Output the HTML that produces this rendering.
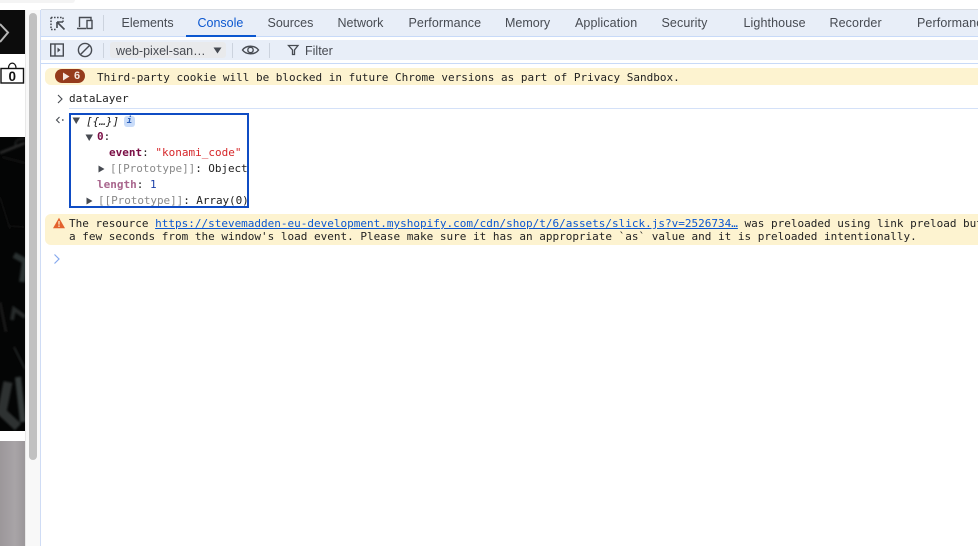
<!DOCTYPE html>
<html><head><meta charset="utf-8"><style>
html,body{margin:0;padding:0;background:#fff}
body{width:978px;height:546px;position:relative;overflow:hidden;filter:blur(.3px)}
.a{position:absolute}
.t{position:absolute;top:16px;font:12.5px/14px "Liberation Sans",sans-serif;color:#474b52;white-space:nowrap}
.m{position:absolute;font:11px/13px "DejaVu Sans Mono",monospace;color:#222;white-space:pre}
</style></head><body>
<div class="a" style="left:0;top:0;width:75px;height:3px;background:#f4f4f4;border-radius:0 0 8px 0"></div>

<!-- left page -->
<div class="a" style="left:0;top:10px;width:25px;height:44px;background:#0c0c0c"></div>
<svg class="a" style="left:0;top:22px" width="12" height="24"><path d="M0 2L8 10.5L0 20" fill="none" stroke="#b5b5b5" stroke-width="2"/></svg>
<svg class="a" style="left:0;top:60px" width="26" height="26"><path d="M8.5 8C8.5 1.5 16 1.5 16 8" fill="none" stroke="#111" stroke-width="1.2"/><rect x="1" y="8.5" width="22.5" height="14.5" fill="#fff" stroke="#111" stroke-width="1.4"/></svg>
<div class="a" style="left:1px;top:70px;width:22.5px;text-align:center;font:bold 13.5px/14px 'Liberation Sans',sans-serif;color:#111">0</div>
<svg class="a" style="left:0;top:137px" width="25" height="294" viewBox="0 0 25 294">
<defs><filter id="b" x="-30%" y="-30%" width="160%" height="160%"><feGaussianBlur stdDeviation="1.1"/></filter></defs>
<rect width="25" height="294" fill="#040505"/>
<g filter="url(#b)" fill="none">
<path d="M0 16L10 12L25 6" stroke-width="2.5" stroke="#2e2f2f"/>
<path d="M16 10C14 5 17 1 25 2" stroke-width="1.5" stroke="#252727"/>
<path d="M2 20L25 26" stroke-width="1.2" stroke="#1c1c1c"/>
<path d="M0 60L10 92" stroke-width="1" stroke="#191919"/>
<path d="M8 89L25 90" stroke-width="1" stroke="#191919"/>
<path d="M14 118L25 124L22 145" stroke-width="6" stroke="#2a3030"/>
<path d="M12 183L14 172L25 180" stroke-width="4" stroke="#262a2a"/>
<path d="M0 165L6 195" stroke-width="2.5" stroke="#1b1d1d"/>
<path d="M14 210L25 232" stroke-width="2" stroke="#202222"/>
<path d="M8 245L2 275L18 290" stroke-width="9" stroke="#2d3232"/>
<path d="M18 240L23 285" stroke-width="6" stroke="#343a3a"/>
</g></svg>
<div class="a" style="left:0;top:441px;width:25px;height:105px;background:linear-gradient(90deg,#9c979a,#a8a4a7 60%,#9b979a)"></div>

<!-- scrollbar -->
<div class="a" style="left:25px;top:10px;width:15px;height:536px;background:#f8f8f8;border-left:1px solid #e8e8e8;box-sizing:border-box"></div>
<div class="a" style="left:29px;top:13px;width:8px;height:447px;background:#c1c1c1;border-radius:4px"></div>
<div class="a" style="left:40px;top:10px;width:1px;height:536px;background:#cfdcf5"></div>

<!-- toolbars -->
<div class="a" style="left:41px;top:9px;width:937px;height:1px;background:#d9dde3"></div>
<div class="a" style="left:41px;top:10px;width:937px;height:26px;background:#e8eef8"></div>
<div class="a" style="left:41px;top:36px;width:937px;height:1px;background:#c8daf8"></div>
<div class="a" style="left:186px;top:35px;width:70px;height:2px;background:#0b57d0"></div>
<div class="a" style="left:41px;top:40px;width:937px;height:20px;background:#e8eef8"></div>
<div class="a" style="left:41px;top:63px;width:937px;height:1px;background:#c8daf8"></div>

<svg class="a" style="left:49px;top:14px" width="20" height="18" fill="none" stroke="#474b52">
<path d="M2 3.5H14M2 3.5V15.5M14 3.5V8M2 15.5H7" stroke-width="1.5" stroke-dasharray="1.6 1.4"/>
<path d="M8 8H14M8 8V14M8.5 8.5L15.5 15.5" stroke-width="1.6"/></svg>
<svg class="a" style="left:76px;top:14px" width="20" height="18" fill="none" stroke="#474b52" stroke-width="1.4">
<path d="M3.5 13V3.5H15V6M1 14.5H10"/><rect x="11" y="6.5" width="5" height="8"/></svg>
<div class="a" style="left:103px;top:15px;width:1px;height:16px;background:#ccd3de"></div>

<div class="t" style="left:121.5px">Elements</div>
<div class="t" style="left:197.5px;color:#0b57d0">Console</div>
<div class="t" style="left:267.5px">Sources</div>
<div class="t" style="left:337.5px">Network</div>
<div class="t" style="left:408.5px;letter-spacing:.1px">Performance</div>
<div class="t" style="left:505px">Memory</div>
<div class="t" style="left:575px;letter-spacing:.1px">Application</div>
<div class="t" style="left:661.5px;letter-spacing:.1px">Security</div>
<div class="t" style="left:743.5px;letter-spacing:.1px">Lighthouse</div>
<div class="t" style="left:829.5px;letter-spacing:.1px">Recorder</div>
<div class="t" style="left:917px;letter-spacing:.1px">Performance</div>

<svg class="a" style="left:49px;top:42px" width="16" height="16" fill="none" stroke="#474b52" stroke-width="1.4">
<rect x="1.7" y="2" width="12.6" height="12"/><path d="M6 2V14"/><path d="M8.5 5.5L11.5 8L8.5 10.5Z" fill="#474b52" stroke="none"/></svg>
<svg class="a" style="left:77px;top:42px" width="16" height="16" fill="none" stroke="#474b52" stroke-width="1.4">
<circle cx="8" cy="8" r="6.6"/><path d="M3.5 12.5L12.5 3.5"/></svg>
<div class="a" style="left:103px;top:43px;width:1px;height:15px;background:#ccd3de"></div>
<div class="a" style="left:110px;top:42px;width:116px;height:16px;background:#e9eaec;border-radius:3px"></div>
<div class="a" style="left:116px;top:44px;font:12.5px/14px 'Liberation Sans',sans-serif;color:#474b52;white-space:nowrap">web-pixel-san…</div>
<svg class="a" style="left:213px;top:47px" width="10" height="7"><path d="M0.5 0.5H8.5L4.5 6.5Z" fill="#474b52"/></svg>
<div class="a" style="left:232px;top:43px;width:1px;height:15px;background:#ccd3de"></div>
<svg class="a" style="left:241px;top:42px" width="20" height="16" fill="none" stroke="#474b52" stroke-width="1.4">
<path d="M1.5 8C5 3 14 3 17.5 8C14 13 5 13 1.5 8Z"/><circle cx="9.5" cy="8" r="2.7"/></svg>
<div class="a" style="left:269px;top:43px;width:1px;height:15px;background:#ccd3de"></div>
<div class="a" style="left:277px;top:40px;width:701px;height:20px;background:#e8eef8;border-radius:10px 0 0 10px"></div>
<svg class="a" style="left:287px;top:43px" width="14" height="14" fill="none" stroke="#474b52" stroke-width="1.3"><path d="M1.5 2.5H11L7.5 7V11.5H5.5V7Z"/></svg>
<div class="a" style="left:305px;top:44px;font:12.5px/14px 'Liberation Sans',sans-serif;color:#474b52">Filter</div>

<!-- cookie row -->
<div class="a" style="left:45px;top:68px;width:933px;height:17px;background:#fdf3d0;border-radius:6px 0 0 6px"></div>
<div class="a" style="left:55px;top:69px;width:30px;height:14px;background:#953b1c;border-radius:7px"></div>
<svg class="a" style="left:62px;top:72px" width="9" height="9"><path d="M1 0.5L7.5 4.5L1 8.5Z" fill="#f5e6df"/></svg>
<div class="a" style="left:74px;top:69px;font:bold 11px/14px 'Liberation Sans',sans-serif;color:#f5e6df">6</div>
<div class="m" style="left:97px;top:71px">Third-party cookie will be blocked in future Chrome versions as part of Privacy Sandbox.</div>

<!-- dataLayer -->
<svg class="a" style="left:56px;top:94px" width="8" height="10"><path d="M2 1L6 5L2 9" fill="none" stroke="#474b52" stroke-width="1.1"/></svg>
<div class="m" style="left:69px;top:92px">dataLayer</div>
<div class="a" style="left:69px;top:108px;width:909px;height:1px;background:#d4e1f8"></div>

<!-- result -->
<svg class="a" style="left:55px;top:115px" width="10" height="10"><path d="M4.5 2L1.5 5L4.5 8" fill="none" stroke="#474b52" stroke-width="1.1"/><circle cx="7.8" cy="5" r="0.9" fill="#474b52"/></svg>
<div class="a" style="left:69px;top:113px;width:180px;height:95px;box-sizing:border-box;border:2px solid #0f4cc4"></div>
<svg class="a" style="left:72px;top:117px" width="9" height="8"><path d="M0.5 0.5H8L4.2 7Z" fill="#474b52"/></svg>
<div class="m" style="left:86px;top:115px;font-style:italic">[{…}]</div>
<div class="a" style="left:124px;top:116px;width:11px;height:11px;background:#c9dcf9;border-radius:3px;font:italic bold 9px/11px 'DejaVu Sans Mono',monospace;color:#2c5fb8;text-align:center">i</div>
<svg class="a" style="left:85px;top:134px" width="9" height="8"><path d="M0.5 0.5H8L4.2 7Z" fill="#474b52"/></svg>
<div class="m" style="left:97px;top:130px"><span style="color:#7a0e45;font-weight:bold">0</span>:</div>
<div class="m" style="left:109px;top:146px"><span style="color:#7a0e45;font-weight:bold">event</span>: <span style="color:#d6272a">"konami_code"</span></div>
<svg class="a" style="left:98px;top:165px" width="7" height="9"><path d="M0.5 0.5L6.5 4L0.5 7.5Z" fill="#474b52"/></svg>
<div class="a" style="overflow:hidden;left:110px;top:162px;width:137px;height:13px"><div class="m" style="left:0;top:0;letter-spacing:-.07px"><span style="color:#8a8a8a">[[Prototype]]</span>: Object</div></div>
<div class="m" style="left:97px;top:178px"><span style="color:#a9668d;font-weight:bold">length</span>: <span style="color:#1a3fa8">1</span></div>
<svg class="a" style="left:86px;top:197px" width="7" height="9"><path d="M0.5 0.5L6.5 4L0.5 7.5Z" fill="#474b52"/></svg>
<div class="a" style="overflow:hidden;left:98px;top:194px;width:149px;height:13px"><div class="m" style="left:0;top:0;letter-spacing:-.07px"><span style="color:#8a8a8a">[[Prototype]]</span>: Array(0)</div></div>

<!-- warning -->
<div class="a" style="left:45px;top:214px;width:933px;height:31px;background:#fdf3d0;border-radius:6px 0 0 6px"></div>
<svg class="a" style="left:53px;top:217px" width="12" height="12"><path d="M6 0.8L12 11.2H0Z" fill="#e3622d"/><path d="M6 4V7.6M6 8.5V10" stroke="#fdf3d0" stroke-width="1.2"/></svg>
<div class="m" style="left:69px;top:217px">The resource <span style="color:#0b57d0;text-decoration:underline">https://stevemadden-eu-development.myshopify.com/cdn/shop/t/6/assets/slick.js?v=2526734…</span> was preloaded using link preload but</div>
<div class="m" style="left:69px;top:230px">a few seconds from the window's load event. Please make sure it has an appropriate `as` value and it is preloaded intentionally.</div>

<svg class="a" style="left:53px;top:253px" width="8" height="12"><path d="M1.5 1.5L6 6L1.5 10.5" fill="none" stroke="#86a9ee" stroke-width="1.2"/></svg>
</body></html>
